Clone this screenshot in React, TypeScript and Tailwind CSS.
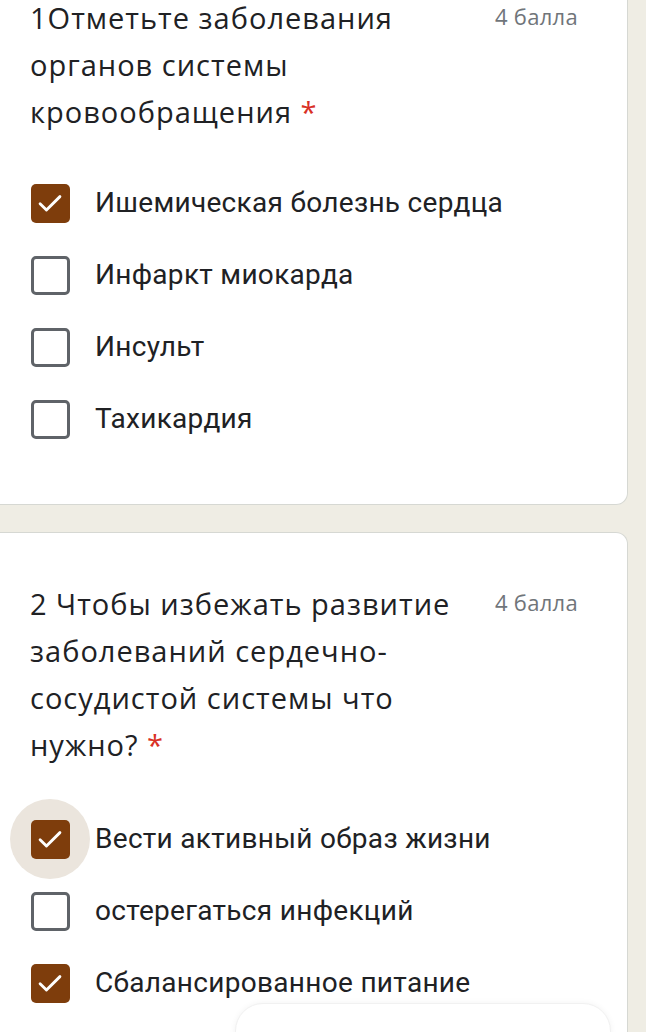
import React from "react";

type Option = { label: string; checked: boolean; focused?: boolean };

const questions: { title: string[]; points: string; options: Option[] }[] = [
  {
    title: ["1Отметьте заболевания", "органов системы", "кровообращения"],
    points: "4 балла",
    options: [
      { label: "Ишемическая болезнь сердца", checked: true },
      { label: "Инфаркт миокарда", checked: false },
      { label: "Инсульт", checked: false },
      { label: "Тахикардия", checked: false },
    ],
  },
  {
    title: ["2 Чтобы избежать развитие", "заболеваний сердечно-", "сосудистой системы что", "нужно?"],
    points: "4 балла",
    options: [
      { label: "Вести активный образ жизни", checked: true, focused: true },
      { label: "остерегаться инфекций", checked: false },
      { label: "Сбалансированное питание", checked: true },
    ],
  },
];

function Checkbox({ checked, focused }: { checked: boolean; focused?: boolean }) {
  return (
    <div className="relative flex h-[40px] w-[40px] items-center justify-center">
      {focused && <div className="absolute -inset-[20px] rounded-full bg-[#ebe5dd]" />}
      {checked ? (
        <div className="relative flex h-[39px] w-[39px] items-center justify-center rounded-[5px] bg-[#7e3d0c]">
          <svg width="34" height="34" viewBox="0 0 24 24" fill="none">
            <path d="M5 12.5l4.5 4.5L19 7.5" stroke="#fff" strokeWidth="2" strokeLinecap="round" strokeLinejoin="round" />
          </svg>
        </div>
      ) : (
        <div className="relative h-[39px] w-[39px] rounded-[5px] border-[3.5px] border-[#5f6368]" />
      )}
    </div>
  );
}

export default function App() {
  return (
    <div className="relative h-[1032px] w-[646px] overflow-hidden bg-[#efede4]">
      <div className="flex flex-col gap-[27px]">
        {questions.map((q, qi) => (
          <div
            key={qi}
            className={`w-[628px] rounded-r-[12px] border border-l-0 border-[#d6d8d3] bg-white pl-[30px] ${
              qi === 0 ? "-mt-[24px] pt-[17px] pb-[49px]" : "pt-[47px] pb-[40px]"
            }`}
          >
            <div className="flex items-start justify-between pr-[49px]">
              <h2 className="text-[29px] leading-[47px] tracking-[1px] text-[#202124] [font-family:'Open_Sans',sans-serif]">
                {q.title.map((line, li) => (
                  <React.Fragment key={li}>
                    {line}
                    {li === q.title.length - 1 ? (
                      <span className="text-[#d93025]"> *</span>
                    ) : (
                      <br />
                    )}
                  </React.Fragment>
                ))}
              </h2>
              <span className="pt-[6px] text-[22px] leading-[32px] tracking-[0.3px] text-[#70757a] [font-family:'Open_Sans',sans-serif]">
                {q.points}
              </span>
            </div>
            <div className={`flex flex-col ${qi === 0 ? "mt-[32px]" : "mt-[35px]"}`}>
              {q.options.map((o) => (
                <div key={o.label} className="flex h-[72px] items-center gap-[25px]">
                  <Checkbox checked={o.checked} focused={o.focused} />
                  <span className="text-[28px] tracking-[0.3px] text-[#202124] [font-family:Roboto,sans-serif]">{o.label}</span>
                </div>
              ))}
            </div>
          </div>
        ))}
      </div>
      <div className="absolute left-[235px] top-[1003px] h-[64px] w-[376px] rounded-[28px] border border-[#f1f1f1] bg-white shadow-[0_0_6px_rgba(0,0,0,0.05)]" />
    </div>
  );
}
